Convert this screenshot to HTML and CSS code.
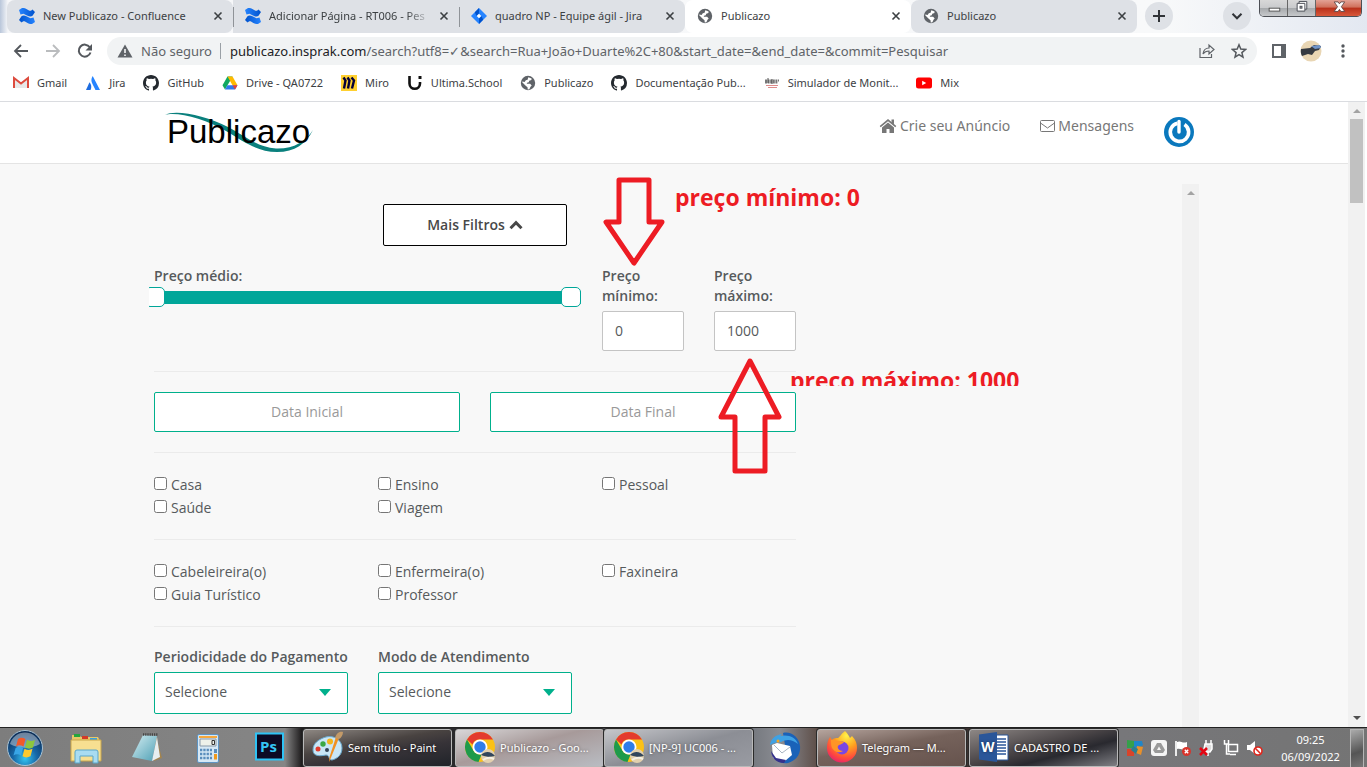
FILE: index.html
```html
<!DOCTYPE html>
<html lang="pt-BR">
<head>
<meta charset="utf-8">
<meta name="viewport" content="width=device-width, initial-scale=1">
<title>Publicazo</title>
<link rel="stylesheet" href="styles.css">
</head>
<body class="desktop">
<svg class="sprite" aria-hidden="true">
  <defs>
    <linearGradient id="blueA" x1="0" x2="1"><stop offset="0" stop-color="#0052cc"/><stop offset="1" stop-color="#2684ff"/></linearGradient>
    <linearGradient id="blueB" x1="1" x2="0"><stop offset="0" stop-color="#0052cc"/><stop offset="1" stop-color="#2684ff"/></linearGradient>
    <radialGradient id="orb" cx=".5" cy=".8" r=".75"><stop offset="0" stop-color="#35c6f2"/><stop offset=".45" stop-color="#1768a8"/><stop offset="1" stop-color="#0b2c56"/></radialGradient>
    <radialGradient id="fox" cx=".65" cy=".15" r=".95"><stop offset="0" stop-color="#fff24a"/><stop offset=".4" stop-color="#ffa21f"/><stop offset=".75" stop-color="#ff4a3c"/><stop offset="1" stop-color="#e01a78"/></radialGradient>
    <linearGradient id="pad" x1="0" y1="0" x2="1" y2="1"><stop offset="0" stop-color="#d5eef2"/><stop offset="1" stop-color="#4fa0b5"/></linearGradient>
  </defs>
  <symbol id="confluence" viewBox="0 0 16 16"><path fill="url(#blueA)" d="M0 12L2.500 8.200C4 6.800 6 7.500 8 8.600l3.500 1.600 3-.6L16 14l-3 2c-3 .3-5-1.500-7-2.600-1.500-.6-2.500.2-3.500 1.200z"/><path fill="url(#blueB)" d="M16 4l-2.500 3.800C12 9.200 10 8.500 8 7.400L4.500 5.800l-3 .6L0 2l3-2c3-.3 5 1.500 7 2.600 1.500.6 2.500-.2 3.500-1.200z"/></symbol>
  <symbol id="jira" viewBox="0 0 16 16"><path fill="#2684ff" d="M8 0l8 8-8 8-8-8z"/><path fill="#0052cc" d="M8 0v5.500L5.500 8 3.800 4.200zM8 16v-5.500L10.500 8l1.700 3.800z"/><path fill="#fff" d="M8 5.700L10.300 8 8 10.300 5.700 8z"/></symbol>
  <symbol id="globe" viewBox="0 0 16 16"><circle cx="8" cy="8" r="7.200" fill="#5f6368"/><path fill="#fff" d="M8.300 2.200l3.300 1.200-.2 1.700-2.200.7-.4 1.500-1.800.5-.2 1h3.300l1.600 1.700-1.200 1.200-1 2.200-1.700.8-.3-2.500-1.800-1.500L2.200 7.300l.1-.8 2.300.4 1.200-1.700 1.800-.5z"/></symbol>
  <symbol id="close" viewBox="0 0 10 10"><path d="M1.500 1.500l7 7m0-7l-7 7" stroke="#3c4043" stroke-width="1.600" fill="none"/></symbol>
  <symbol id="github" viewBox="0 0 16 16"><path fill="#24292f" d="M8 0C3.580 0 0 3.580 0 8c0 3.540 2.290 6.530 5.470 7.590.4.070.55-.17.55-.38v-1.500c-2 .4-2.500-.5-2.700-1-.1-.25-.5-1-.8-1.200-.3-.15-.7-.5 0-.5.600 0 1.100.6 1.200.8.700 1.200 1.900.9 2.300.7.100-.5.300-.9.500-1.100-1.800-.2-3.600-.9-3.600-4 0-.9.300-1.600.8-2.100-.1-.2-.4-1 .1-2.100 0 0 .7-.2 2.200.8a7.500 7.500 0 0 1 4 0c1.500-1 2.200-.8 2.200-.8.400 1.100.200 1.900.100 2.100.5.600.8 1.300.8 2.100 0 3.100-1.900 3.800-3.700 4 .3.200.5.700.5 1.500v2.200c0 .2.200.5.600.4A8 8 0 0 0 16 8c0-4.420-3.580-8-8-8z"/></symbol>
  <symbol id="chrome" viewBox="0 0 32 32"><circle cx="16" cy="16" r="15" fill="#fbc116"/><path fill="#e33b2e" d="M3 8.500A15 15 0 0 1 29 8.500H16a7.500 7.500 0 0 0-7.500 5z"/><path fill="#1e9a4b" d="M3 8.500l6.500 11.300A7.500 7.500 0 0 0 17.500 23.400L14.500 31A15 15 0 0 1 3 8.500z"/><circle cx="16" cy="16" r="7.500" fill="#fff"/><circle cx="16" cy="16" r="5.700" fill="#2f7de9"/><circle cx="24" cy="25" r="7" fill="#e2d0ae"/><path d="M17 24c4-4 10-4 14 1l-6 1-5-1z" fill="#32465c"/><path d="M19 29c3-2 7-3 11-1" stroke="#f5efe2" stroke-width="2" fill="none"/></symbol>
</svg>

<div class="tabstrip">
  <div class="tab"><svg class="icon"><use href="#confluence"/></svg><span class="tab-title">New Publicazo - Confluence</span><button class="tab-close" aria-label="Fechar"><svg><use href="#close"/></svg></button></div>
  <div class="tab tab-ruled"><svg class="icon"><use href="#confluence"/></svg><span class="tab-title tab-fade">Adicionar Página - RT006 - Pes</span><button class="tab-close" aria-label="Fechar"><svg><use href="#close"/></svg></button></div>
  <div class="tab tab-ruled tab-end"><svg class="icon"><use href="#jira"/></svg><span class="tab-title">quadro NP - Equipe ágil - Jira</span><button class="tab-close" aria-label="Fechar"><svg><use href="#close"/></svg></button></div>
  <div class="tab tab-active"><svg class="icon"><use href="#globe"/></svg><span class="tab-title">Publicazo</span><button class="tab-close" aria-label="Fechar"><svg><use href="#close"/></svg></button></div>
  <div class="tab"><svg class="icon"><use href="#globe"/></svg><span class="tab-title">Publicazo</span><button class="tab-close" aria-label="Fechar"><svg><use href="#close"/></svg></button></div>
  <button class="round" aria-label="Nova guia"><svg viewBox="0 0 14 14"><path d="M7 1v12M1 7h12" stroke="#303337" stroke-width="2"/></svg></button>
  <div class="spacer"></div>
  <button class="round" aria-label="Pesquisar guias"><svg viewBox="0 0 14 14"><path d="M2.500 4.800L7 9.300l4.500-4.500" stroke="#303337" stroke-width="2" fill="none"/></svg></button>
  <div class="window-buttons">
    <button class="win" aria-label="Minimizar"><svg viewBox="0 0 28 16"><rect x="9.500" y="8.500" width="11" height="3" fill="#fff" stroke="#555"/></svg></button>
    <button class="win" aria-label="Restaurar"><svg viewBox="0 0 28 16"><path d="M11.500 1.500h8v8h-2v2h-8v-8h2z" fill="#fff" stroke="#4a4d55"/><path d="M11.500 3.500h6v6" fill="none" stroke="#4a4d55"/><rect x="12.500" y="6.500" width="2" height="2" fill="#aaa" stroke="#4a4d55"/></svg></button>
    <button class="win win-close" aria-label="Fechar janela"><svg viewBox="0 0 47 16"><path d="M19 2h4l1.500 2L26 2h4l-3.500 5 3.500 5h-4l-1.500-2.200L23 12h-4l3.500-5z" fill="#fff" stroke="#5b4545" stroke-width=".9"/></svg></button>
  </div>
</div>

<div class="toolbar">
  <button class="tool" aria-label="Voltar"><svg viewBox="0 0 16 16"><path d="M15 8H2.500M8 2L2 8l6 6" stroke="#54585d" stroke-width="1.800" fill="none"/></svg></button>
  <button class="tool" aria-label="Avançar"><svg viewBox="0 0 16 16"><path d="M1 8h12.500M8 2l6 6-6 6" stroke="#babcbe" stroke-width="1.800" fill="none"/></svg></button>
  <button class="tool" aria-label="Recarregar"><svg viewBox="0 0 16 16"><path d="M13.500 9.500A6 6 0 1 1 12.800 4.300" stroke="#54585d" stroke-width="2" fill="none"/><path d="M15 1v6.500H8.500z" fill="#54585d"/></svg></button>
  <div class="omnibox">
    <svg class="warn" viewBox="0 0 16 14"><path d="M8 .5l7.500 13H.5z" fill="#5f6368"/><path d="M8 5v4M8 10.500v1.500" stroke="#fff" stroke-width="1.500"/></svg>
    <span class="unsafe">Não seguro</span>
    <span class="url"><b>publicazo.insprak.com</b>/search?utf8=✓&amp;search=Rua+João+Duarte%2C+80&amp;start_date=&amp;end_date=&amp;commit=Pesquisar</span>
    <button class="tool" aria-label="Compartilhar"><svg viewBox="0 0 16 16"><path d="M1 5v9.500h11.500V11" stroke="#5f6368" stroke-width="1.200" fill="none"/><path d="M4 11c.5-4 3-6 6-6V2l5 4.500-5 4.500V8c-2.500 0-4.500.8-6 3z" stroke="#5f6368" stroke-width="1.200" fill="none"/></svg></button>
    <button class="tool" aria-label="Favoritar"><svg viewBox="0 0 16 16"><path d="M8 1.800l1.800 4.300 4.700.4-3.600 3.100 1.100 4.600L8 11.700l-4 2.500 1.100-4.600-3.600-3.100 4.700-.4z" stroke="#54585d" stroke-width="1.500" fill="none"/></svg></button>
  </div>
  <button class="tool" aria-label="Painel lateral"><svg viewBox="0 0 16 16"><path d="M2 2h12v12H2z" fill="none" stroke="#5f6368" stroke-width="2"/><path d="M10 2h4v12h-4z" fill="#5f6368"/></svg></button>
  <button class="tool tool-avatar" aria-label="Perfil"><svg viewBox="0 0 22 22"><circle cx="11" cy="11" r="10.500" fill="#e9d6b4"/><path d="M1 9l9-1 4-3 7 1-2 4-4 1-3 4-4-1-6 2c-1-2-1.500-4-1-7z" fill="#363b42"/><path d="M11 6l9-1 1 3-6 1z" fill="#6f94c9"/></svg></button>
  <button class="tool" aria-label="Menu"><svg viewBox="0 0 16 16"><g fill="#54585d"><circle cx="8" cy="3" r="1.700"/><circle cx="8" cy="8" r="1.700"/><circle cx="8" cy="13" r="1.700"/></g></svg></button>
</div>

<nav class="bookmarks">
  <a href="#"><svg class="icon" viewBox="0 0 16 16"><path d="M2 3l6 5 6-5v10H2z" fill="#e8e8e8"/><path d="M1 13V3l7 5.500L15 3v10" fill="none" stroke="#dd4b3e" stroke-width="2"/></svg>Gmail</a>
  <a href="#"><svg class="icon" viewBox="0 0 16 16"><path d="M4.500 7.200c1.900 2.200 2.400 5 1 7.800H1z" fill="#1d6ce0"/><path d="M7.700 1C6 4 6 6.200 7.500 9l3 6H15z" fill="#2684ff"/></svg>Jira</a>
  <a href="#"><svg class="icon"><use href="#github"/></svg>GitHub</a>
  <a href="#"><svg class="icon" viewBox="0 0 16 16"><path d="M5.500 1.500h5L8 6 3 14.500.5 10.300z" fill="#11a861"/><path d="M5.500 1.500h5l5 8.800h-5z" fill="#ffba00"/><path d="M5.400 10.300h10.100L13 14.500H3z" fill="#2f7bed"/><path d="M10.500 10.300h5L13 14.500z" fill="#e84135"/></svg>Drive - QA0722</a>
  <a href="#"><svg class="icon" viewBox="0 0 16 16"><path d="M0 0h16v16H0z" fill="#ffd02f"/><path d="M2.500 2.500l2 3L3 13.500M6.500 2.500l2 3L7 13.500M10.500 2.500l2.500 3-2 8" fill="none" stroke="#050038" stroke-width="2.400"/></svg>Miro</a>
  <a href="#"><svg class="icon" viewBox="0 0 16 16"><path d="M2.500 1v7.500a5 5 0 0 0 10.500 0V7" fill="none" stroke="#111" stroke-width="2.600"/><path d="M11.500 1h3v3h-3z" fill="#111"/></svg>Ultima.School</a>
  <a href="#"><svg class="icon"><use href="#globe"/></svg>Publicazo</a>
  <a href="#"><svg class="icon"><use href="#github"/></svg>Documentação Pub...</a>
  <a href="#"><svg class="icon" viewBox="0 0 16 16"><path d="M1 5.500h14M1 7.500h13" stroke="#777" stroke-width="2" stroke-dasharray="2 .6"/><path d="M4 3v5M8 4v5" stroke="#555"/><path d="M2 10.500h12M4 12.500h9" stroke="#dc8b8b"/></svg>Simulador de Monit...</a>
  <a href="#"><svg class="icon" viewBox="0 0 16 16"><rect y="2.500" width="16" height="11" rx="2.500" fill="#f00"/><path d="M6.200 5.700v4.600l4-2.300z" fill="#fff"/></svg>Mix</a>
</nav>

<div class="viewport">
  <div class="page">
    <header class="site-header">
      <div class="site-bar">
        <a class="logo" href="#" aria-label="Publicazo"><svg viewBox="0 0 152 44"><path d="M1 5C10-1 42 5 64 17C84 28 94 37 112 38.500C130 39 141 32 149 20C142 34 131 42 113 42C94 42 82 33 62 21C42 9 12 1 1 5z" fill="#0a807d"/><text x="3" y="33" class="logo-text">Publicazo</text></svg></a>
        <nav class="site-nav">
          <a href="#"><svg class="nav-icon nav-home" viewBox="0 0 18 16"><path d="M9 1l8.300 7-1 1.200L9 3.200 1.700 9.200.7 8z" fill="#777"/><path d="M9 4.500l6 5V15h-4.500v-4h-3v4H3V9.500zM12.500 1.500H15v5l-2.500-2z" fill="#777"/></svg>Crie seu Anúncio</a>
          <a href="#"><svg class="nav-icon" viewBox="0 0 15 14"><rect x=".5" y="1.500" width="14" height="11" rx="1" fill="none" stroke="#777"/><path d="M.5 4l7 5 7-5" fill="none" stroke="#777"/></svg>Mensagens</a>
          <a class="avatar" href="#" aria-label="Conta"><svg viewBox="0 0 30 30"><circle cx="15" cy="15" r="15" fill="#0a78bd"/><path d="M13.500 6.200A9.200 9.200 0 1 0 20.500 7.500" fill="none" stroke="#fff" stroke-width="3.600"/><path d="M15 4.500V15" stroke="#fff" stroke-width="3.400" stroke-linecap="round"/></svg></a>
        </nav>
      </div>
    </header>

    <main class="results">
      <form class="filters">
        <button type="button" class="more">Mais Filtros <svg viewBox="0 0 14 10"><path d="M1.500 8.200L7 2.700l5.500 5.500" fill="none" stroke="#484848" stroke-width="3"/></svg></button>

        <div class="price-row">
          <div class="price-range">
            <label class="label" for="range-min">Preço médio:</label>
            <div class="slider">
              <input class="range range-min" id="range-min" type="range" min="0" max="1000" value="0">
              <input class="range" type="range" min="0" max="1000" value="1000" aria-label="Preço médio máximo">
            </div>
          </div>
          <div class="field"><label class="label" for="pmin">Preço mínimo:</label><input class="box" id="pmin" type="text" value="0"></div>
          <div class="field"><label class="label" for="pmax">Preço máximo:</label><input class="box" id="pmax" type="text" value="1000"></div>
        </div>
        <hr>
        <div class="dates">
          <input class="date" type="text" placeholder="Data Inicial" aria-label="Data Inicial">
          <input class="date" type="text" placeholder="Data Final" aria-label="Data Final">
        </div>
        <hr>
        <div class="checks">
          <label><input type="checkbox">Casa</label><label><input type="checkbox">Ensino</label><label><input type="checkbox">Pessoal</label>
          <label><input type="checkbox">Saúde</label><label><input type="checkbox">Viagem</label>
        </div>
        <hr>
        <div class="checks">
          <label><input type="checkbox">Cabeleireira(o)</label><label><input type="checkbox">Enfermeira(o)</label><label><input type="checkbox">Faxineira</label>
          <label><input type="checkbox">Guia Turístico</label><label><input type="checkbox">Professor</label>
        </div>
        <hr>
        <div class="selects">
          <div class="field"><label class="label" for="period">Periodicidade do Pagamento</label><span class="pick"><select id="period"><option>Selecione</option></select></span></div>
          <div class="field"><label class="label" for="mode">Modo de Atendimento</label><span class="pick"><select id="mode"><option>Selecione</option></select></span></div>
        </div>

        <svg class="note arrow-down" viewBox="0 0 64 92"><path d="M17 4h30v42h13L32 87 4 46h13z"/></svg>
        <span class="note note-min">preço mínimo: 0</span>
        <svg class="note arrow-up" viewBox="0 0 66 118"><path d="M33 4l29 56H48v54H18V60H4z"/></svg>
        <span class="note note-max">preço máximo: 1000</span>
      </form>
      <div class="scroll scroll-inner"><i class="tri tri-up"></i></div>
    </main>
  </div>
  <div class="scroll"><i class="tri tri-up"></i><i class="thumb"></i><i class="tri tri-down"></i></div>
</div>

<footer class="taskbar">
  <button class="start" aria-label="Iniciar"><svg viewBox="0 0 36 36"><circle cx="18" cy="18" r="17.500" fill="url(#orb)" stroke="#a9c3d4"/><path d="M3 14a15.500 15.500 0 0 1 30 0c-9 5-21 5-30 0z" fill="#fff" opacity=".4"/><path d="M11 9c3-2 5-1.500 7.500 0l-2 7.500c-2.500-1.500-5-2-7.500 0z" fill="#f1592a"/><path d="M20 9.700c3 1.700 5.500 1.500 8 0L26 17.500c-3 1.500-5 1.500-8 0z" fill="#8cc63f"/><path d="M8.600 18c2.500-1.800 5-1.500 7.500 0L14 25.500c-2.500-1.500-5-1.800-7.500 0z" fill="#39a5e6"/><path d="M17.500 18.800c3 1.600 5.500 1.500 8 0l-2 7.500c-3 1.500-5.500 1.500-8 0z" fill="#fdc92f"/></svg></button>
  <button class="quick" aria-label="Explorador"><svg viewBox="0 0 32 32"><path d="M2 3h7l2 2h17l2 4v19H2z" fill="#e9c967"/><path d="M4 2h6v3H4z" fill="#25a53c"/><path d="M12 4h6v3h-6z" fill="#d33a26"/><path d="M20 6h7v3h-7z" fill="#3aa0dd"/><path d="M1 8h30v21H1z" fill="#f7df91" stroke="#c9a64c"/><path d="M5 31V20q0-2 2-2h19q2 0 2 2v11h-5v-7H10v7z" fill="#a9dcf1" stroke="#5ba6c9"/></svg></button>
  <button class="quick" aria-label="Bloco de notas"><svg viewBox="0 0 32 32"><path d="M25 4l6 22-8 3z" fill="#a3844e"/><path d="M12 3l14 1-5 25L1 25z" fill="url(#pad)"/><path d="M26 5l3 20-8 4z" fill="#e7eef0"/><path d="M12 2.500h15" stroke="#444" stroke-width="2.500" stroke-dasharray="1.200 1"/></svg></button>
  <button class="quick" aria-label="Calculadora"><svg viewBox="0 0 32 32"><rect x="5.500" y="2.500" width="21" height="28" rx="1.500" fill="#d6e8f5" stroke="#5d94c3"/><path d="M7 4h18v2H7z" fill="#f5a83c"/><path d="M8 7h16v7H8z" fill="#eef1ea" stroke="#89a"/><path d="M20 8.500h2.500v4H20z" fill="none" stroke="#333"/><path d="M8 18h12M8 22h12M8 26h12" stroke="#5a8dbc" stroke-width="2.500" stroke-dasharray="2.300 1"/><path d="M22 17h3v4h-3z" fill="#5a8dbc"/><path d="M22 22h3v5.500h-3z" fill="#f19a1e"/></svg></button>
  <button class="quick quick-last" aria-label="Photoshop"><svg viewBox="0 0 32 32"><rect x="3" y="1.500" width="27" height="26" fill="#0c0a24" stroke="#2fc3f5" stroke-width="2"/><text x="7" y="20" class="ps">Ps</text></svg></button>
  <button class="task task-dark"><svg viewBox="0 0 32 32"><path d="M14 6C22 4 30 9 30 17s-6 11-10 12c-4 0-2-5-6-5-5 1-13 2-13-5S7 8 14 6z" fill="#c9e7f6" stroke="#6aa9cd"/><circle cx="6" cy="18" r="2.500" fill="#e23c2d"/><circle cx="11" cy="13" r="2.700" fill="#3aa843"/><circle cx="18" cy="10.500" r="3" fill="#f3b51d"/><circle cx="15" cy="19" r="2" fill="#345"/><path d="M27 7l-9 22-1 2 .5-5L24 6z" fill="#f19122"/><path d="M23 7c1-4 4-7 8-6 0 3-2 6-4 7z" fill="#c39a68"/></svg>Sem título - Paint</button>
  <button class="task task-light"><svg><use href="#chrome"/></svg>Publicazo - Goo...</button>
  <button class="task task-mid"><svg><use href="#chrome"/></svg>[NP-9] UC006 - ...</button>
  <button class="bird" aria-label="Thunderbird"><svg viewBox="0 0 32 32"><path d="M14 1c8-2 16 4 17 13 1 8-4 15-12 17-5 1-11-1-14-6l12-6z" fill="#1a62b8"/><path d="M1 13C2 6 7 3 13 2l-2 2c8-2 16 1 18 8-6-5-12-5-17-2-4 0-8 1-11 3z" fill="#3fa2e4"/><path d="M3 13l5-2 13 3 2 9-7 6-12-3z" fill="#fff"/><path d="M5 13l8 8 8-6" stroke="#a9b5c2" fill="none"/><path d="M2 19l5 7 10 2-2 3C8 31 3 27 2 19z" fill="#35318c"/><circle cx="9" cy="9" r="1.500" fill="#f6a623"/></svg></button>
  <button class="task task-brown"><svg viewBox="0 0 32 32"><path d="M19 0c3 3 4 5 5 7l2-2c4 4 5 8 5 12a15 14.500 0 0 1-30 0C1 12 2 9 4 6l2 3c2-2 4-2 6-2 1 0 3-4 7-7z" fill="url(#fox)"/><circle cx="16" cy="17" r="6.500" fill="#7947e3"/><path d="M5 9c4-1 6 1 9 1l4 1c-2 3-5 2-6 4s1 5 5 5c-5 3-9 0-11-3-1-3-1-5-1-8z" fill="#ff9526"/></svg>Telegram — M...</button>
  <button class="task task-word"><svg viewBox="0 0 32 32"><path d="M14 4h16v25H14z" fill="#fff" stroke="#2a5699"/><path d="M19 8h9M19 11h9M19 14h9M19 17h9M19 20h9M19 23h9" stroke="#2a5699" stroke-width="1.300"/><path d="M1 3.500L19 1v30L1 28.500z" fill="#2a5699"/><text x="3" y="21" class="wd">W</text></svg>CADASTRO DE ...</button>
  <div class="tray">
    <svg viewBox="0 0 16 16"><path d="M0 0l7 1v7H0z" fill="#35a04a"/><path d="M7 1l8 0 1 4-5 3-4-1z" fill="#1f86c9"/><path d="M0 9h7v7H0z" fill="#d8442b"/><path d="M10 6l6 1-2 8-5-2z" fill="#e8902a"/><path d="M6 6l5 3-2 5-5-4z" fill="#2b7f8e"/></svg>
    <svg viewBox="0 0 16 16"><rect width="16" height="16" rx="3" fill="#f5f5f5"/><path d="M6 3h4l4 7-2 3H4l-2-3z" fill="#9a9a9a"/><path d="M8 6.500l2 3.500H6z" fill="#f5f5f5"/></svg>
    <svg viewBox="0 0 16 16"><path d="M1 1v15" stroke="#fff" stroke-width="1.700"/><path d="M2 2c4-2 5 2 10 0v7c-4 2-6-1-10 0z" fill="#fff"/><circle cx="11.500" cy="11.500" r="4.500" fill="#d9342b"/><path d="M9.800 9.800l3.400 3.400m0-3.400l-3.400 3.400" stroke="#fff" stroke-width="1.400"/></svg>
    <svg viewBox="0 0 16 16"><path d="M6 4h7v5l-2 3H7l-2-3zM7 4V0M12 4V0M9 12v4" fill="#ddd" stroke="#fff" stroke-width="1.500"/><path d="M1 8l7 7m0-7l-7 7" stroke="#e30613" stroke-width="2.500"/></svg>
    <svg viewBox="0 0 16 16"><path d="M5.500 4.500h9v7h-9zM7 14.500h6M1.500 0v4h4V0M3.500 4v10H7" fill="none" stroke="#fff" stroke-width="1.500"/></svg>
    <svg viewBox="0 0 16 16"><path d="M0 5h3l5-4v13l-5-4H0z" fill="#fff"/><circle cx="11" cy="11" r="4" fill="#fff" stroke="#e0251b" stroke-width="1.600"/><path d="M8.300 8.300l5.400 5.400" stroke="#e0251b" stroke-width="1.600"/></svg>
  </div>
  <div class="clock"><time>09:25</time><time>06/09/2022</time></div>
  <button class="peek" aria-label="Mostrar área de trabalho"></button>
</footer>
</body>
</html>
```
FILE: styles.css
```css
* { box-sizing: border-box; }
button, input, select { font: inherit; color: inherit; }
button { border: 0; padding: 0; background: none; }
a { color: inherit; text-decoration: none; }
svg { display: block; flex: none; }

.desktop {
  margin: 0;
  height: 100vh;
  display: flex;
  flex-direction: column;
  overflow: hidden;
  background: #fff;
  font-family: "Noto Sans", "Open Sans", sans-serif;
  font-size: 11px;
  color: #3c4043;
}
.sprite { position: absolute; width: 0; height: 0; }
.icon { width: 16px; height: 16px; }
.spacer { flex: 1; }

/* Tab strip */
.tabstrip {
  flex: none;
  display: flex;
  height: 33px;
  padding: 0 5px 0 7px;
  background: linear-gradient(90deg, #b9c6da 0, #f6f7f9 8px, #f8f9fa 85%, #e3e8f1 100%);
}
.tab {
  flex: 0 1 226px;
  min-width: 0;
  display: flex;
  align-items: center;
  gap: 8px;
  padding: 0 10px 2px 12px;
  background: #dee1e6;
  border-radius: 8px;
}
.tab-ruled { background: linear-gradient(#8f9398, #8f9398) 0 50% / 1px 20px no-repeat #dee1e6; border-radius: 0; }
.tab-end { border-radius: 0 8px 8px 0; }
.tab-active { background: #fff; }
.tab-title { flex: 1; min-width: 0; overflow: hidden; white-space: nowrap; }
.tab-fade { mask-image: linear-gradient(90deg, #000 85%, transparent); }
.tab-close svg { width: 10px; height: 10px; }
.round {
  width: 28px;
  height: 28px;
  margin: 2px 8px;
  display: grid;
  place-items: center;
  border-radius: 50%;
  background: #dee1e6;
}
.round svg { width: 14px; height: 14px; }
.window-buttons {
  display: flex;
  align-self: flex-start;
  border: 1px solid #4c4f55;
  border-top: 0;
  border-radius: 0 0 5px 5px;
  overflow: hidden;
}
.win { width: 28px; height: 16px; background: linear-gradient(#d8d8d8, #c9cacc 50%, #a5a8ab 50%, #c6c8ca); border-right: 1px solid #666; }
.win-close { width: 45px; border: 0; background: linear-gradient(#e3a295, #d0705b 45%, #b8301a 50%, #d8583a); }

/* Address bar */
.toolbar { flex: none; display: flex; align-items: center; height: 36px; padding: 0 8px 0 5px; }
.tool { width: 32px; height: 28px; display: grid; place-items: center; }
.tool svg { width: 16px; height: 16px; }
.tool-avatar svg { width: 22px; height: 22px; }
.omnibox {
  flex: 1;
  min-width: 0;
  display: flex;
  align-items: center;
  height: 28px;
  margin: 0 6px;
  padding: 0 2px 0 10px;
  border-radius: 14px;
  background: #f1f3f4;
  font-size: 13px;
  color: #5f6368;
}
.warn { width: 16px; height: 14px; margin-right: 8px; }
.unsafe { padding-right: 8px; border-right: 1px solid #9aa0a6; line-height: 16px; white-space: nowrap; }
.url { flex: 1; min-width: 0; margin-left: 9px; overflow: hidden; white-space: nowrap; }
.url b { font-weight: 400; color: #202124; }

/* Bookmarks */
.bookmarks {
  flex: none;
  display: flex;
  gap: 18px;
  height: 33px;
  padding: 0 13px 5px;
  border-bottom: 1px solid #dadce0;
}
.bookmarks a { display: flex; align-items: center; gap: 8px; white-space: nowrap; }

/* Web page */
.viewport { flex: 1; min-height: 0; display: flex; padding-right: 2px; }
.page {
  flex: 1;
  min-width: 0;
  display: flex;
  flex-direction: column;
  background: #f8f8f8;
  color: #565a5c;
  font-family: "Open Sans", "Noto Sans", sans-serif;
  font-size: 14px;
  line-height: 20px;
}
.site-header { flex: none; height: 62px; background: #fff; border-bottom: 1px solid #e4e4e4; }
.site-bar { display: flex; justify-content: space-between; max-width: 1040px; margin: 0 auto; padding: 8px 0 0 10px; }
.logo svg { width: 152px; height: 44px; }
.logo-text { font: 33px "Liberation Sans", Arial, sans-serif; fill: #000; }
.site-nav { display: flex; gap: 30px; padding-top: 6px; color: #777; font-family: "Noto Sans", sans-serif; }
.site-nav a { display: flex; align-items: center; gap: 3px; height: 20px; }
.nav-icon { width: 15px; height: 14px; }
.nav-home { width: 18px; height: 16px; }
.site-nav .avatar { height: 32px; }
.avatar svg { width: 30px; height: 30px; }

.results {
  flex: 1;
  min-height: 0;
  width: 100%;
  max-width: 1050px;
  margin: 0 auto;
  padding-top: 20px;
  display: flex;
  justify-content: space-between;
  overflow: hidden;
}
.filters { position: relative; flex: 0 1 652px; height: max-content; padding: 20px 5px 12px; }
.label { display: block; margin-bottom: 5px; font-weight: 600; }
.more {
  display: flex;
  align-items: center;
  justify-content: center;
  gap: 4px;
  width: 184px;
  height: 42px;
  margin: 0 auto 20px 229px;
  border: 1px solid #000;
  border-radius: 2px;
  background: #fff;
  color: #484848;
  font-weight: 600;
}
.more svg { width: 14px; height: 10px; }
.price-row { display: grid; grid-template-columns: 1fr 82px 82px; gap: 30px; }
.price-range .label { margin-bottom: 1px; }
.slider { display: grid; margin: 0 -9px 0 -5px; overflow: hidden; }
.range {
  appearance: none;
  grid-area: 1 / 1;
  width: 100%;
  height: 20px;
  margin: 0;
  background: linear-gradient(#00a699, #00a699) center / 100% 13px no-repeat;
}
.range-min { margin-left: -4px; z-index: 1; background: none; pointer-events: none; }
.range::-webkit-slider-thumb {
  appearance: none;
  width: 20px;
  height: 20px;
  border: 1px solid #00a699;
  border-radius: 5px;
  background: #fff;
  pointer-events: auto;
}
.box, .date {
  width: 100%;
  height: 40px;
  padding: 0 12px 2px;
  border: 1px solid #c4c4c4;
  border-radius: 2px;
  background: #fff;
}
.date { border-color: #00b08c; text-align: center; }
.date::placeholder { color: #999; }
hr { width: 100%; margin: 20px 0; border: 0; border-top: 1px solid #ebebeb; }
.dates { display: grid; grid-template-columns: 1fr 1fr; gap: 30px; }
.checks, .selects { display: grid; grid-template-columns: repeat(3, minmax(0, 1fr)); column-gap: 30px; }
.checks { line-height: 23px; }
.checks label { display: flex; align-items: center; gap: 4px; }
.checks input { width: 13px; height: 13px; margin: 0 0 2px; }
.selects .label { white-space: nowrap; }
.pick { position: relative; display: block; }
.pick::after {
  content: "";
  position: absolute;
  right: 17px;
  top: 17px;
  border: 6px solid transparent;
  border-top: 7px solid #00b08c;
  border-bottom: 0;
  pointer-events: none;
}
.pick select {
  appearance: none;
  width: 100%;
  height: 42px;
  padding: 0 10px 2px;
  border: 1px solid #00b08c;
  border-radius: 2px;
  background: #fff;
}

/* Red annotations laid over the form */
.note { position: absolute; color: #ed1c24; font-size: 23px; font-weight: 700; line-height: 32px; white-space: nowrap; pointer-events: none; }
.note path { fill: none; stroke: #ed1c24; stroke-width: 5; stroke-linejoin: round; }
.arrow-down { left: 453px; top: -8px; width: 64px; height: 92px; }
.arrow-up { left: 568px; top: 173px; width: 66px; height: 118px; }
.note-min { left: 526px; top: -3px; }
.note-max { left: 641px; top: 180px; height: 22px; overflow: hidden; }

/* Scroll bars */
.scroll { flex: none; display: flex; flex-direction: column; align-items: center; width: 17px; padding: 7px 0; background: #f1f1f1; }
.tri { border: 4px solid transparent; }
.tri-up { border-top: 0; border-bottom-color: #a3a3a3; }
.tri-down { margin-top: auto; border-bottom: 0; border-top-color: #505050; }
.thumb { width: 13px; height: 84px; margin-top: 6px; background: #c1c1c1; }

/* Taskbar */
.taskbar {
  flex: none;
  display: flex;
  align-items: center;
  height: 40px;
  padding: 1px 3px 0 7px;
  border-top: 1px solid #222;
  background: linear-gradient(90deg, #7d7d7d 0, #858585 285px, #1d1b1c 302px, #29282c 450px, #777a80 754px, #8a8c92 780px, #5b4a43 820px, #3a302e 966px, #77777a 1120px, #747474 100%);
  color: #fff;
  font-size: 11px;
}
.start svg { width: 36px; height: 36px; }
.start { margin-right: 12px; }
.quick { width: 61px; display: grid; place-items: center; }
.quick svg, .task svg, .bird svg { width: 32px; height: 32px; }
.quick-last { margin-right: 4px; }
.task {
  flex: 0 1 149px;
  min-width: 0;
  display: flex;
  align-items: center;
  gap: 4px;
  height: 38px;
  padding: 0 8px 2px;
  border: 1px solid #b9b9b9;
  border-radius: 3px;
  box-shadow: 0 0 0 1px #2a2a2a;
  overflow: hidden;
  white-space: nowrap;
  text-shadow: 0 0 3px #0008;
}
.task-dark { margin-right: 3px; background: linear-gradient(170deg, #8d8782 0, #494341 40%, #373338 60%, #202329 100%); }
.task-light { background: linear-gradient(165deg, #d9d7d8, #a79a9a 45%, #b9bcc2); }
.task-mid { background: linear-gradient(165deg, #c5c6ca, #8c8e95 50%, #999ba2); }
.bird { width: 64px; display: grid; place-items: center; }
.task-brown { margin-right: 3px; background: linear-gradient(170deg, #b5a49d, #75625b 45%, #66534d); }
.task-word { background: linear-gradient(165deg, #8d8785, #4a4547 45%, #29292f 65%, #7e7e83); }
.ps { font: 700 15px "Open Sans", sans-serif; fill: #35c5f5; }
.wd { font: 700 14px "Open Sans", sans-serif; fill: #fff; }
.tray { display: flex; gap: 8px; margin-left: 9px; }
.tray svg { width: 16px; height: 16px; }
.clock { flex: 1; display: flex; flex-direction: column; align-items: center; padding-left: 8px; line-height: 17px; }
.peek { width: 14px; height: 39px; border: 1px solid #b5b5b5; background: linear-gradient(160deg, #aaa, #555 60%, #777); }
```
